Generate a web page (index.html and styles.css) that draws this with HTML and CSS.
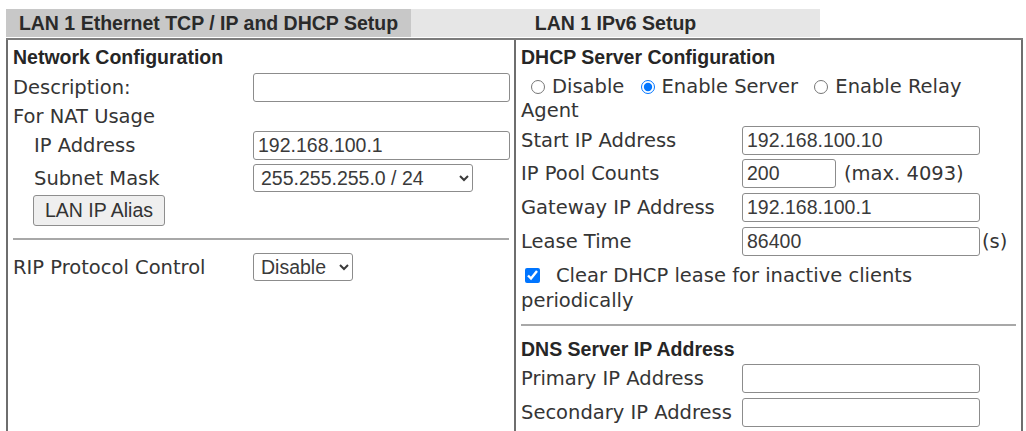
FILE: index.html
```html
<!DOCTYPE html>
<html>
<head>
<meta charset="utf-8">
<link rel="stylesheet" href="styles.css">
</head>
<body>
<div class="page">
  <div class="tabs">
    <div class="tab tab-active">LAN 1 Ethernet TCP / IP and DHCP Setup</div>
    <div class="tab tab-idle">LAN 1 IPv6 Setup</div>
  </div>
  <div class="panels">
    <section class="panel panel-left">
      <div class="title">Network Configuration</div>
      <div class="row row-34"><label class="lbl">Description:</label><input class="field field-left" type="text" value=""></div>
      <div class="row row-24"><span class="lbl">For NAT Usage</span></div>
      <div class="row row-35 indent"><label class="lbl lbl-ind">IP Address</label><input class="field field-left" type="text" value="192.168.100.1"></div>
      <div class="row row-30 indent"><label class="lbl lbl-ind">Subnet Mask</label><select class="sel sel-mask"><option>255.255.255.0 / 24</option></select></div>
      <div class="row row-34 indent"><button class="btn" type="button">LAN IP Alias</button></div>
      <div class="sep sep-24"><hr class="rule"></div>
      <div class="row row-32"><label class="lbl">RIP Protocol Control</label><select class="sel sel-rip"><option>Disable</option></select></div>
    </section>
    <section class="panel panel-right">
      <div class="title">DHCP Server Configuration</div>
      <div class="radios">
        <label class="opt"><input class="radio" type="radio" name="mode">Disable</label>
        <label class="opt"><input class="radio" type="radio" name="mode" checked>Enable Server</label>
        <label class="opt"><input class="radio" type="radio" name="mode">Enable Relay</label>
        <span class="opt-tail">Agent</span>
      </div>
      <div class="row row-34"><label class="lbl lbl-r">Start IP Address</label><input class="field field-right" type="text" value="192.168.100.10"></div>
      <div class="row row-33"><label class="lbl lbl-r">IP Pool Counts</label><input class="field field-pool" type="text" value="200"><span class="note">(max. 4093)</span></div>
      <div class="row row-34"><label class="lbl lbl-r">Gateway IP Address</label><input class="field field-right" type="text" value="192.168.100.1"></div>
      <div class="row row-34"><label class="lbl lbl-r">Lease Time</label><input class="field field-right" type="text" value="86400"><span class="unit">(s)</span></div>
      <div class="check"><input class="cbox" type="checkbox" checked>Clear DHCP lease for inactive clients periodically</div>
      <div class="sep sep-24"><hr class="rule"></div>
      <div class="title title-dns">DNS Server IP Address</div>
      <div class="row row-35"><label class="lbl lbl-r">Primary IP Address</label><input class="field field-right" type="text" value=""></div>
      <div class="row row-32"><label class="lbl lbl-r">Secondary IP Address</label><input class="field field-right" type="text" value=""></div>
    </section>
  </div>
</div>
</body>
</html>
```

FILE: styles.css
```css
html, body {
  margin: 0;
  padding: 0;
  background: #ffffff;
}

body {
  font-family: "DejaVu Sans", Verdana, sans-serif;
  font-size: 19.5px;
  color: #353535;
  overflow: hidden;
}

.page {
  width: 1017px;
  margin: 9px 0 0 6px;
}

.tabs {
  display: flex;
  height: 28px;
  border-bottom: 2px solid #7c7c7c;
  padding-bottom: 1px;
}

.tab {
  font-family: "Liberation Sans", Arial, sans-serif;
  font-weight: bold;
  font-size: 19.5px;
  color: #2a2a2a;
  text-align: center;
  line-height: 28px;
}

.tab-active {
  width: 405px;
  background: #c8c8c8;
}

.tab-idle {
  width: 409px;
  background: #e6e6e6;
}

.panels {
  display: grid;
  grid-template-columns: 508px 509px;
  height: 400px;
}

.panel {
  border-left: 2px solid #6e6e6e;
  padding-top: 4px;
  box-sizing: border-box;
}

.panel-left {
  padding-left: 5px;
  padding-right: 5px;
}

.panel-right {
  border-right: 2px solid #6e6e6e;
  padding-left: 5px;
  padding-right: 5px;
}

.title {
  font-family: "Liberation Sans", Arial, sans-serif;
  font-weight: bold;
  font-size: 19.5px;
  color: #262626;
  height: 26px;
  line-height: 26px;
}

.title-dns {
  height: 24px;
  line-height: 24px;
}

.row {
  display: flex;
  align-items: center;
  white-space: nowrap;
}

.row-24 { height: 24px; }
.row-30 { height: 30px; }
.row-32 { height: 32px; }
.row-33 { height: 33px; }
.row-34 { height: 34px; }
.row-35 { height: 35px; }

.indent {
  padding-left: 21px;
}

.lbl {
  display: inline-block;
  width: 240px;
  flex: none;
}

.lbl-ind {
  width: 219px;
}

.lbl-r {
  width: 221px;
}

.field {
  box-sizing: border-box;
  height: 29px;
  border: 1px solid #8c8c8c;
  border-radius: 3px;
  padding: 0 4px;
  font-family: "Liberation Sans", Arial, sans-serif;
  font-size: 19.5px;
  color: #3a3a3a;
  background: #ffffff;
  outline: none;
  flex: none;
}

.field-left { width: 257px; }
.field-right { width: 238px; }
.field-pool { width: 94px; }

.note {
  margin-left: 8px;
}

.unit {
  margin-left: 2px;
}

.sel {
  box-sizing: border-box;
  height: 28px;
  border: 1px solid #8c8c8c;
  border-radius: 3px;
  padding: 0 2px 0 3px;
  font-family: "Liberation Sans", Arial, sans-serif;
  font-size: 19.5px;
  color: #3a3a3a;
  background: #ffffff;
  flex: none;
}

.sel-mask { width: 220px; }
.sel-rip { width: 100px; }

.btn {
  box-sizing: border-box;
  width: 132px;
  height: 31px;
  border: 1px solid #8e8e8e;
  border-radius: 3px;
  background: #efefef;
  font-family: "Liberation Sans", Arial, sans-serif;
  font-size: 19.5px;
  color: #333333;
  padding: 0;
  margin-left: -1px;
}

.sep {
  display: flex;
  align-items: center;
}

.sep-24 { height: 24px; }

.rule {
  width: 100%;
  margin: 0;
  border: 0;
  height: 2px;
  background: #a8a8a8;
}

.radios {
  margin-top: 5px;
  line-height: 24px;
  padding-right: 40px;
}

.opt {
  white-space: nowrap;
}

.opt-tail {
  display: inline-block;
}

.radio {
  width: 14px;
  height: 14px;
  margin: 0 7px 0 10px;
  vertical-align: -1px;
}

.check {
  margin-top: 5px;
  line-height: 25px;
  padding-right: 60px;
}

.cbox {
  width: 15px;
  height: 15px;
  margin: 0 16px 0 4px;
  vertical-align: -1px;
}
```
